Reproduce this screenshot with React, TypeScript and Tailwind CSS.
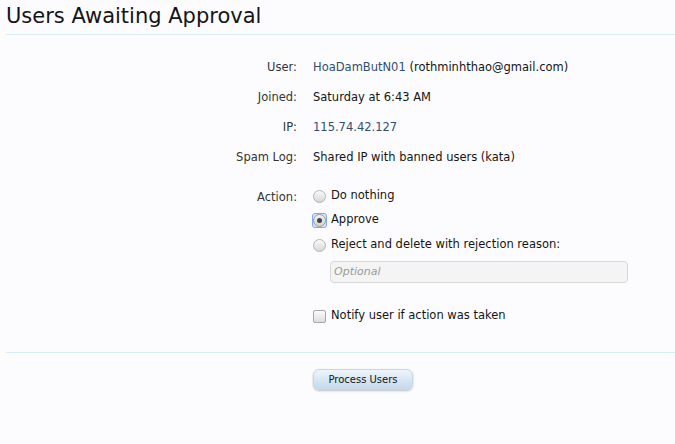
import React from "react";

const font = { fontFamily: '"DejaVu Sans", "Liberation Sans", sans-serif' };

function Radio({ checked }: { checked?: boolean }) {
  const dot = (
    <span
      className={
        "inline-flex items-center justify-center w-[13px] h-[13px] rounded-full border " +
        (checked
          ? "border-[#9a9a9a] bg-gradient-to-b from-[#f0f0f0] to-[#d4d4d4]"
          : "border-[#b5b5b5] bg-gradient-to-b from-[#fbfbfb] to-[#d6d6d6]")
      }
    >
      {checked && <span className="w-[5px] h-[5px] rounded-full bg-[#444]" />}
    </span>
  );
  if (checked) {
    return (
      <span className="inline-flex items-center justify-center w-[15px] h-[15px] -mx-[1px] rounded-[3px] border border-[#7fa8ee] bg-[#dbe7fb]">
        {dot}
      </span>
    );
  }
  return dot;
}

export default function App() {
  return (
    <div className="w-[675px] h-[444px] bg-[#fcfcff] text-[#141414] text-[11.5px] overflow-hidden" style={font}>
      <div className="pl-[6px] pt-[3px]">
        <h1 className="text-[21px] leading-[26px] text-[#141414]">Users Awaiting Approval</h1>
      </div>
      <div className="ml-[6px] mt-[5px] h-px bg-[#d7edfc]" />
      <div className="pt-[18px]">
        {[
          ["User:", <><span className="text-[#2f4e72]">HoaDamButN01</span> (rothminhthao@gmail.com)</>],
          ["Joined:", "Saturday at 6:43 AM"],
          ["IP:", <span className="text-[#2f4e72]">115.74.42.127</span>],
          ["Spam Log:", "Shared IP with banned users (kata)"],
        ].map(([label, value], i) => (
          <div key={i} className="flex h-[30px] items-center">
            <div className="w-[297px] text-right text-[#333]">{label}</div>
            <div className="pl-[16px]">{value}</div>
          </div>
        ))}
        <div className="flex mt-[15px]">
          <div className="w-[297px] text-right text-[#333] leading-[16px] pt-[1px]">Action:</div>
          <div className="pl-[16px] flex flex-col">
            <label className="flex items-center gap-[5px] h-[16px]">
              <Radio /> <span>Do nothing</span>
            </label>
            <label className="flex items-center gap-[5px] h-[16px] mt-[8px]">
              <Radio checked /> <span>Approve</span>
            </label>
            <label className="flex items-center gap-[5px] h-[16px] mt-[9px]">
              <Radio /> <span>Reject and delete with rejection reason:</span>
            </label>
            <div className="ml-[17px] mt-[8px] w-[298px] h-[22px] rounded-[4px] border border-[#d8d8d8] bg-[#f4f4f4] flex items-center px-[3px] italic text-[#9a9a9a] text-[11px]">
              Optional
            </div>
            <label className="flex items-center gap-[5px] h-[16px] mt-[25px]">
              <span className="w-[13px] h-[13px] rounded-[2px] border border-[#a8a8a8] bg-gradient-to-b from-[#fbfbfb] to-[#dedede]" />
              <span>Notify user if action was taken</span>
            </label>
          </div>
        </div>
      </div>
      <div className="ml-[6px] mt-[28px] h-px bg-[#d7edfc]" />
      <div className="flex pl-[313px] pt-[16px]">
        <button className="w-[100px] h-[21px] rounded-[6px] border border-[#c8d8e6] bg-gradient-to-b from-[#eef5fb] to-[#c3d9ec] shadow-[0_1px_2px_rgba(0,0,0,0.25)] text-[10px] text-[#141414]">
          Process Users
        </button>
      </div>
    </div>
  );
}
